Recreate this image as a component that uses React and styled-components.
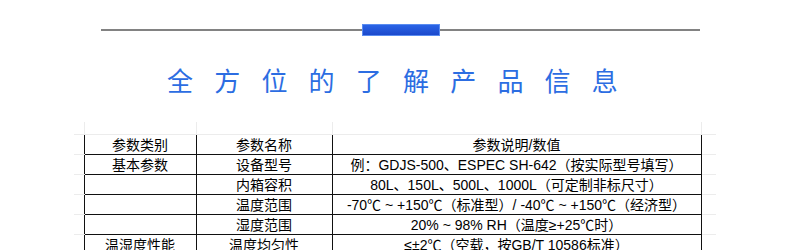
import React from "react";
import styled, { createGlobalStyle } from "styled-components";

const Global = createGlobalStyle`
  html, body { margin: 0; padding: 0; background: #fff; }
  body { font-family: "Liberation Sans", "Noto Sans CJK SC", sans-serif; }
`;

const Page = styled.div`
  width: 790px;
  height: 250px;
  overflow: hidden;
  background: #fff;
  display: flex;
  flex-direction: column;
`;

const Divider = styled.div`
  margin: 24px 0 0 101px;
  width: 599px;
  height: 12px;
  display: flex;
  align-items: center;
`;

const Line = styled.div`
  flex: 1;
  height: 2px;
  background: #828282;
`;

const Bar = styled.div`
  width: 78px;
  height: 12px;
  box-sizing: border-box;
  border: 1px solid #5a8cf0;
  background: linear-gradient(180deg, #2a64e6 0%, #1c49cc 100%);
`;

const Title = styled.h1`
  margin: 29px 0 0 0;
  padding-left: 167px;
  font-family: "Noto Sans CJK SC", sans-serif;
  font-weight: 400;
  font-size: 26px;
  line-height: 30px;
  letter-spacing: 21.2px;
  color: #2c6de2;
  white-space: nowrap;
`;

const Sheet = styled.table`
  margin: 27px 0 0 74px;
  width: 642px;
  border-collapse: collapse;
  table-layout: fixed;
  font-family: "Liberation Sans", "Noto Sans CJK SC", sans-serif;
  font-size: 14px;
  color: #000;
`;

const Cell = styled.td`
  height: ${(p) => (p.$top ? "12px" : "19px")};
  padding: 0;
  line-height: 18px;
  text-align: center;
  white-space: nowrap;
  overflow: hidden;
  border: 1px solid ${(p) => (p.$data ? "#111" : "#ececec")};
  ${(p) => p.$edge && "border-left: none; border-right: none;"}
  ${(p) => p.$top && "border-top: none;"}
`;

const cols = [10, 112, 136, 369, 15];

const rows = [
  ["参数类别", "参数名称", "参数说明/数值"],
  ["基本参数", "设备型号", "例：GDJS-500、ESPEC SH-642（按实际型号填写）"],
  ["", "内箱容积", "80L、150L、500L、1000L（可定制非标尺寸）"],
  ["", "温度范围", "-70℃ ~ +150℃（标准型）/ -40℃ ~ +150℃（经济型）"],
  ["", "湿度范围", "20% ~ 98% RH（温度≥+25℃时）"],
  ["温湿度性能", "温度均匀性", "≤±2℃（空载，按GB/T 10586标准）"],
];

export default function App() {
  return (
    <Page>
      <Global />
      <Divider>
        <Line />
        <Bar />
        <Line />
      </Divider>
      <Title>全方位的了解产品信息</Title>
      <Sheet>
        <colgroup>
          {cols.map((w, i) => (
            <col key={i} style={{ width: w }} />
          ))}
        </colgroup>
        <tbody>
          <tr>
            <Cell $top $edge />
            <Cell $top />
            <Cell $top />
            <Cell $top />
            <Cell $top $edge />
          </tr>
          {rows.map((r, i) => (
            <tr key={i}>
              <Cell $edge />
              {r.map((t, j) => (
                <Cell key={j} $data>
                  {t}
                </Cell>
              ))}
              <Cell $edge />
            </tr>
          ))}
        </tbody>
      </Sheet>
    </Page>
  );
}
